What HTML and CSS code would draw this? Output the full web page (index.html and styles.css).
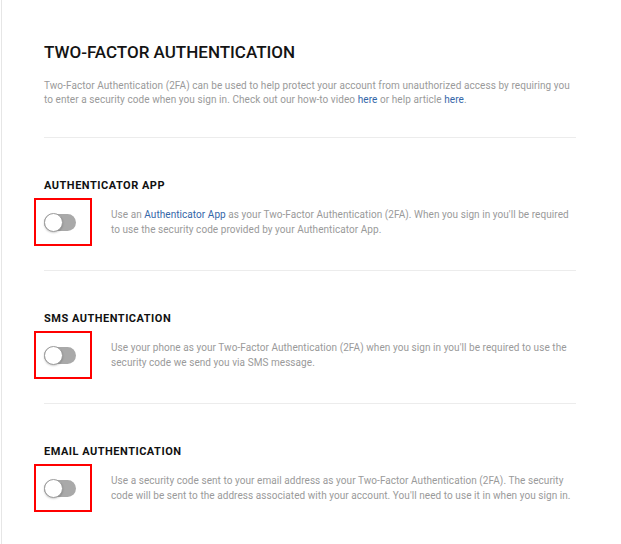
FILE: index.html
```html
<!DOCTYPE html>
<html>
<head>
<meta charset="UTF-8">
<link rel="stylesheet" href="styles.css">
<title>Two-Factor Authentication</title>
</head>
<body>
  <div class="panel">
    <div class="intro">
      <h1 class="title">TWO-FACTOR AUTHENTICATION</h1>
      <p class="lead">Two-Factor Authentication (2FA) can be used to help protect your account from unauthorized access by requiring you to enter a security code when you sign in. Check out our how-to video <a href="#">here</a> or help article <a href="#">here</a>.</p>
    </div>

    <div class="method">
      <h2 class="method-title">AUTHENTICATOR APP</h2>
      <div class="method-row">
        <div class="mark"><span class="toggle"></span></div>
        <p class="method-text">Use an <a href="#">Authenticator App</a> as your Two-Factor Authentication (2FA). When you sign in you'll be required to use the security code provided by your Authenticator App.</p>
      </div>
    </div>

    <div class="method">
      <h2 class="method-title">SMS AUTHENTICATION</h2>
      <div class="method-row">
        <div class="mark"><span class="toggle"></span></div>
        <p class="method-text">Use your phone as your Two-Factor Authentication (2FA) when you sign in you'll be required to use the security code we send you via SMS message.</p>
      </div>
    </div>

    <div class="method last">
      <h2 class="method-title">EMAIL AUTHENTICATION</h2>
      <div class="method-row">
        <div class="mark"><span class="toggle"></span></div>
        <p class="method-text">Use a security code sent to your email address as your Two-Factor Authentication (2FA). The security code will be sent to the address associated with your account. You'll need to use it in when you sign in.</p>
      </div>
    </div>
  </div>
</body>
</html>
```

FILE: styles.css
```css
body {
  margin: 0;
  background-color: #fff;
  font-family: Roboto, "Liberation Sans", sans-serif;
}
.panel {
  margin-left: 1px;
  border-left: 1px solid #e6e6e6;
  min-height: 544px;
  padding: 0 45px 0 42px;
  box-sizing: border-box;
}
.intro {
  padding-top: 42px;
  padding-bottom: 31px;
  border-bottom: 1px solid #ececec;
}
.title {
  margin: 0;
  font-size: 17px;
  font-weight: 500;
  color: #141414;
  line-height: 20px;
}
.lead {
  margin: 17px 0 0;
  font-size: 10px;
  line-height: 13.5px;
  letter-spacing: 0.07px;
  color: #9a9a9a;
}
a {
  color: #3466a8;
  text-decoration: none;
}

.method {
  padding-top: 41px;
  padding-bottom: 24px;
  border-bottom: 1px solid #ececec;
}
.method.last {
  border-bottom: none;
}
.method-title {
  margin: 0 0 5px;
  font-size: 11px;
  font-weight: 700;
  letter-spacing: 0.5px;
  line-height: 14px;
  color: #111;
}
.method-row {
  display: flex;
  align-items: center;
  margin-left: -10px;
}
.mark {
  width: 46px;
  height: 44px;
  border: 2px solid #f00;
  display: flex;
  align-items: center;
  padding-left: 8px;
  flex-shrink: 0;
}
.toggle {
  position: relative;
  display: inline-block;
  width: 32px;
  height: 17px;
  border-radius: 9px;
  background-color: #a9a9a9;
}
.toggle::before {
  content: "";
  position: absolute;
  left: 0;
  top: -1px;
  width: 17px;
  height: 17px;
  border-radius: 50%;
  background-color: #fff;
  border: 1px solid #9c9c9c;
  box-shadow: 0 1px 2px rgba(0, 0, 0, 0.2);
}
.method-text {
  margin: 0 0 0 19px;
  font-size: 10px;
  line-height: 15px;
  letter-spacing: 0.06px;
  color: #9a9a9a;
}
```
